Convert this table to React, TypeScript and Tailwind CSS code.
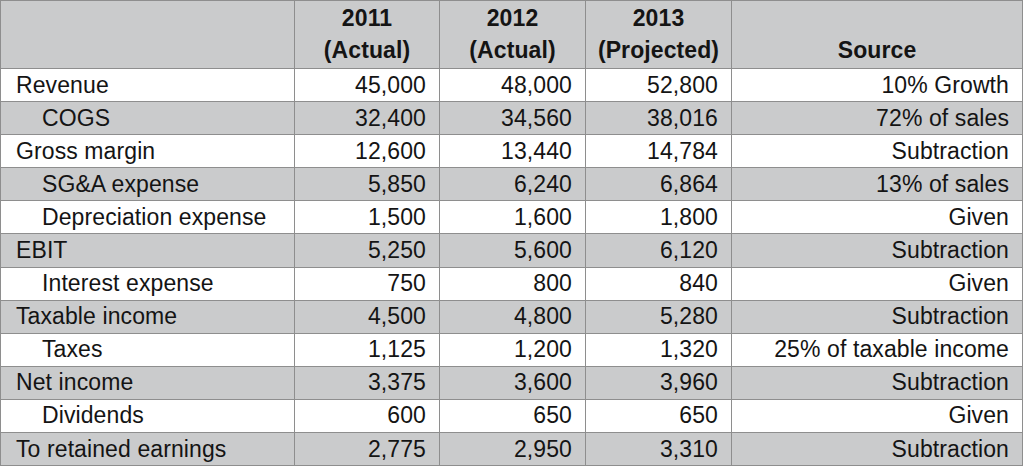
const rows: [string, boolean, string, string, string, string][] = [
  ['Revenue', false, '45,000', '48,000', '52,800', '10% Growth'],
  ['COGS', true, '32,400', '34,560', '38,016', '72% of sales'],
  ['Gross margin', false, '12,600', '13,440', '14,784', 'Subtraction'],
  ['SG&A expense', true, '5,850', '6,240', '6,864', '13% of sales'],
  ['Depreciation expense', true, '1,500', '1,600', '1,800', 'Given'],
  ['EBIT', false, '5,250', '5,600', '6,120', 'Subtraction'],
  ['Interest expense', true, '750', '800', '840', 'Given'],
  ['Taxable income', false, '4,500', '4,800', '5,280', 'Subtraction'],
  ['Taxes', true, '1,125', '1,200', '1,320', '25% of taxable income'],
  ['Net income', false, '3,375', '3,600', '3,960', 'Subtraction'],
  ['Dividends', true, '600', '650', '650', 'Given'],
  ['To retained earnings', false, '2,775', '2,950', '3,310', 'Subtraction'],
];

export default function App() {
  return (
    <div className="w-[1024px] h-[466px] bg-white font-['Liberation_Sans',Arial,sans-serif] text-[23px] tracking-[0.1px] text-[#141414]">
      <div className="w-[1023px] grid grid-cols-[293px_144px_145px_145px_1fr] gap-px bg-[#8e8e8e] p-px">
        {/* header */}
        <div className="bg-[#cacbcc] h-[67px]" />
        {['2011|(Actual)', '2012|(Actual)', '2013|(Projected)'].map((h) => (
          <div key={h} className="bg-[#cacbcc] h-[67px] flex flex-col items-center justify-end pb-[2px] font-bold leading-[32px]">
            <span>{h.split('|')[0]}</span>
            <span>{h.split('|')[1]}</span>
          </div>
        ))}
        <div className="bg-[#cacbcc] h-[67px] flex items-end justify-center pb-[2px] font-bold leading-[32px]">
          Source
        </div>

        {rows.map(([label, indent, a, b, c, src], i) => {
          const bg = i % 2 === 1 ? 'bg-[#cacbcc]' : 'bg-white';
          return [
            <div key={label + '0'} className={`${bg} h-[32.1px] flex items-center leading-none ${indent ? 'pl-[41px]' : 'pl-[15px]'}`}>
              {label}
            </div>,
            ...[a, b, c, src].map((v, j) => (
              <div key={label + j} className={`${bg} h-[32.1px] flex items-center justify-end pr-[13px] leading-none`}>
                {v}
              </div>
            )),
          ];
        })}
      </div>
    </div>
  );
}
